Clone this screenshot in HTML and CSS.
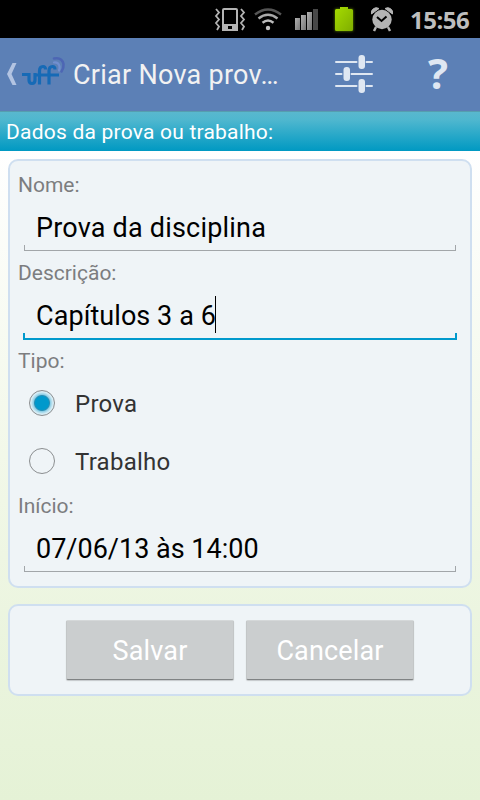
FILE: index.html
```html
<!doctype html>
<html lang="pt-BR">
<head>
    <meta charset="UTF-8">
    <meta name="viewport" content="width=device-width, initial-scale=1.0">
    <title>Criar Nova prova</title>
    <link rel="stylesheet" href="styles.css">
</head>
<body>
<div class="status">
    <svg width="160" height="38" viewBox="210 0 160 38" class="status-icons">
        <defs>
            <filter id="glow" x="-50%" y="-50%" width="200%" height="200%">
                <feGaussianBlur stdDeviation="1.6"/>
            </filter>
            <linearGradient id="bat" x1="0" y1="0" x2="1" y2="1">
                <stop offset="0" stop-color="#a6dc00"/>
                <stop offset="1" stop-color="#7fae00"/>
            </linearGradient>
            <linearGradient id="bar" x1="0" y1="0" x2="1" y2="1">
                <stop offset="0" stop-color="#b0b0b0"/>
                <stop offset="1" stop-color="#777"/>
            </linearGradient>
        </defs>
        <!-- vibrar -->
        <rect x="223" y="9" width="14" height="21" rx="1" fill="none" stroke="#b4b4b4" stroke-width="2"/>
        <path d="M222 24h16v7h-16z" fill="#b4b4b4"/>
        <path d="M228 26h4v3h-4z" fill="#000"/>
        <path d="M216 9l3 3.500-3 3.500 3 3.500-3 3.500 3 3.500-2 3.500M241 9l3 3.500-3 3.500 3 3.500-3 3.500 3 3.500-2 3.500" fill="none" stroke="#b4b4b4" stroke-width="1.800"/>
        <!-- wifi -->
        <g fill="none" stroke-width="2.400">
            <path d="M255 14.500q13-10 26 0" stroke="#555"/>
            <path d="M258.500 18.500q9.500-7.500 19 0" stroke="#aaa"/>
            <path d="M262.500 22.800q5.500-4.500 11 0" stroke="#bbb"/>
        </g>
        <circle cx="268" cy="28" r="2.200" fill="#c4c4c4"/>
        <!-- sinal -->
        <g fill="url(#bar)">
            <rect x="295" y="18" width="5" height="12"/>
            <rect x="301" y="15" width="5" height="15"/>
            <rect x="307" y="12" width="5" height="18"/>
        </g>
        <rect x="313" y="9" width="5" height="21" fill="#484848"/>
        <!-- bateria -->
        <path d="M335 9h18v22h-18z" fill="#8bc000" opacity=".7" filter="url(#glow)"/>
        <path d="M340 7h8v2h3.500q1.500 0 1.500 1.500v19q0 1.500-1.500 1.500h-15q-1.500 0-1.500-1.500v-19q0-1.500 1.500-1.500h3.500z" fill="url(#bat)"/>
    </svg>
    <!-- alarme -->
    <svg width="24" height="26" viewBox="370 6 24 26" class="alarm">
        <path d="M371.500 14a5 5 0 0 1 7.500-5.500zM392.500 14a5 5 0 0 0-7.500-5.500z" fill="#b4b4b4" stroke="#b4b4b4"/>
        <circle cx="382" cy="19.500" r="9.700" fill="#b4b4b4"/>
        <path d="M376 27l-2 4M388 27l2 4" stroke="#b4b4b4" stroke-width="2.500"/>
        <path d="M377 17l4.500 4 5-4.500" fill="none" stroke="#000" stroke-width="2"/>
    </svg>
    <span class="clock">15:56</span>
</div>

<div class="topbar">
    <svg width="70" height="73" viewBox="0 38 70 73" class="logo">
        <path d="M12.500 63h4l-5 11 5 11h-4l-5.500-11z" fill="#b3c4e2"/>
        <g fill="none" stroke-linecap="round">
            <path d="M54 58.500q8-1.500 9.500 5.500.5 4-2 7.500" stroke="#4d66b4" stroke-width="2.600"/>
            <path d="M54 62.500q4.500-.5 5.500 4 .3 2-.5 4" stroke="#718fd0" stroke-width="2.200"/>
        </g>
        <path d="M22 74.500h7V80q0 3.500 3 3.500t3-3.500V73M39.500 84.500V71q0-4.500 3.500-4.500 2.500 0 2.500 3M49 84.500V71q0-4.500 3.500-4.500 2.500 0 2.500 3M36 75h23" fill="none" stroke="#166ab6" stroke-width="3.200"/>
    </svg>
    <h1>Criar Nova prov…</h1>
    <svg width="40" height="40" viewBox="334 54 40 40" class="sliders">
        <path d="M336 62h20.500M366.500 62h5.500M336 74h5.500M351.500 74H372M336 86h20.500M366.500 86h5.500" stroke="#dfe7f2" stroke-width="2" stroke-linecap="round"/>
        <g fill="#dfe7f2">
            <rect x="358.500" y="55" width="6.500" height="14" rx="3"/>
            <rect x="343.500" y="67" width="6.500" height="14" rx="3"/>
            <rect x="358.500" y="79" width="6.500" height="14" rx="3"/>
        </g>
    </svg>
    <span class="help">?</span>
</div>

<h2 class="section">Dados da prova ou trabalho:</h2>

<div class="card form">
    <div class="label">Nome:</div>
    <div class="field wide">Prova da disciplina</div>
    <div class="label">Descrição:</div>
    <div class="field active">Capítulos 3 a 6<i class="caret"></i></div>
    <div class="label">Tipo:</div>
    <div class="radios">
        <div class="radio checked"><i></i><span>Prova</span></div>
        <div class="radio"><i></i><span>Trabalho</span></div>
    </div>
    <div class="label">Início:</div>
    <div class="field">07/06/13 às 14:00</div>
</div>

<div class="card buttons">
    <button>Salvar</button>
    <button>Cancelar</button>
</div>
</body>
</html>
```
FILE: styles.css
```css
*{
    box-sizing: border-box;
}
body{
    margin:0;
    height:800px;
    overflow:hidden;
    font-family: Roboto, "Liberation Sans", sans-serif;
    background: linear-gradient(#fff 151px, #f0f7e6 500px, #e5f2d6 800px);
}
h1,h2{
    margin:0;
    font-weight: 400;
}

/* barra de status */
.status{
    display: flex;
    height:38px;
    padding-left:210px;
    background-color: #000;
}
.status-icons{
    flex:none;
}
.status .alarm{
    margin-top:6px;
    flex:none;
}
.clock{
    margin-left:16px;
    font:bold 24px/39px "Open Sans", sans-serif;
    letter-spacing: -.5px;
    color:#bebebe;
}

/* topo */
.topbar{
    display: flex;
    align-items: center;
    height:73px;
    background-color: #5c80b6;
}
.logo{
    flex:none;
}
h1{
    width:215px;
    margin-left:3px;
    padding-top:1px;
    font-size:27px;
    line-height:72px;
    letter-spacing: .27px;
    white-space: nowrap;
    color:#f2f2f2;
}
.sliders{
    margin:-1px 0 0 46px;
}
.help{
    width:30px;
    margin:-3px 0 0 49px;
    text-align: center;
    font:bold 42px/70px "Open Sans", sans-serif;
    color:#dfe7f2;
}
.section{
    height:40px;
    padding-left:6px;
    border-top:1px solid #569eaf;
    background: linear-gradient(#59b8ce, #4fb7cf 20%, #0099c2);
    font-size:21px;
    line-height:40px;
    letter-spacing: .22px;
    color:#fff;
}

/* cartoes */
.card{
    margin:8px 8px 0;
    border:2px solid #cfdff0;
    border-radius: 10px;
    background-color: #eff4f7;
}
.form{
    height:429px;
    padding:11px 8px 0;
}
.label{
    height:25px;
    font-size:21px;
    line-height:27px;
    color:#7c7d7f;
}
.field{
    display: flex;
    height:54px;
    margin:0 6px 9px;
    padding:15px 0 0 12px;
    font-size:27px;
    line-height:32px;
    white-space: nowrap;
    color:#000;
    background:
        linear-gradient(#a2a6a9,#a2a6a9) left bottom/1px 6px no-repeat,
        linear-gradient(#a2a6a9,#a2a6a9) right bottom/1px 6px no-repeat,
        linear-gradient(#a2a6a9,#a2a6a9) left bottom/100% 1px no-repeat;
}
.field.wide{
    letter-spacing: .2px;
}
.field.active{
    height:55px;
    margin:0 5px 8px;
    padding-left:13px;
    letter-spacing: .07px;
    background:
        linear-gradient(#0099cc,#0099cc) left bottom/2px 7px no-repeat,
        linear-gradient(#0099cc,#0099cc) right bottom/2px 7px no-repeat,
        linear-gradient(#0099cc,#0099cc) left bottom/100% 2px no-repeat;
}
.caret{
    width:1px;
    height:37px;
    margin:-4px 0 0 -1px;
    background-color: #000;
}
.radios{
    padding:1px 0 3px;
}
.radio{
    display: flex;
    align-items: center;
    height:58px;
    padding-left:11px;
    font-size:24px;
    letter-spacing: .25px;
    color:#333;
}
.radio i{
    width:26px;
    height:26px;
    margin-right:20px;
    border:1.5px solid #8b8e90;
    border-radius: 50%;
}
.radio span{
    padding-top:2px;
}
.radio.checked i{
    background: radial-gradient(circle, #0099cc 6.500px, #2c8fb4 7.500px, #8fcfe6 8.500px, #d8edf5 11px);
}

.buttons{
    display: flex;
    justify-content: center;
    gap:12px;
    height:92px;
    margin-top:16px;
    padding-top:14px;
}
button{
    width:168px;
    height:60px;
    padding:2px 0 0;
    border:1px solid #c3c6c7;
    border-top-color:#d5d8d9;
    border-bottom:1px solid #808384;
    border-radius: 2px;
    background-color: #cbcecf;
    box-shadow: 0 1px 1px #c4c8ca;
    font:27px Roboto, sans-serif;
    letter-spacing: .15px;
    color:#fff;
}
```
